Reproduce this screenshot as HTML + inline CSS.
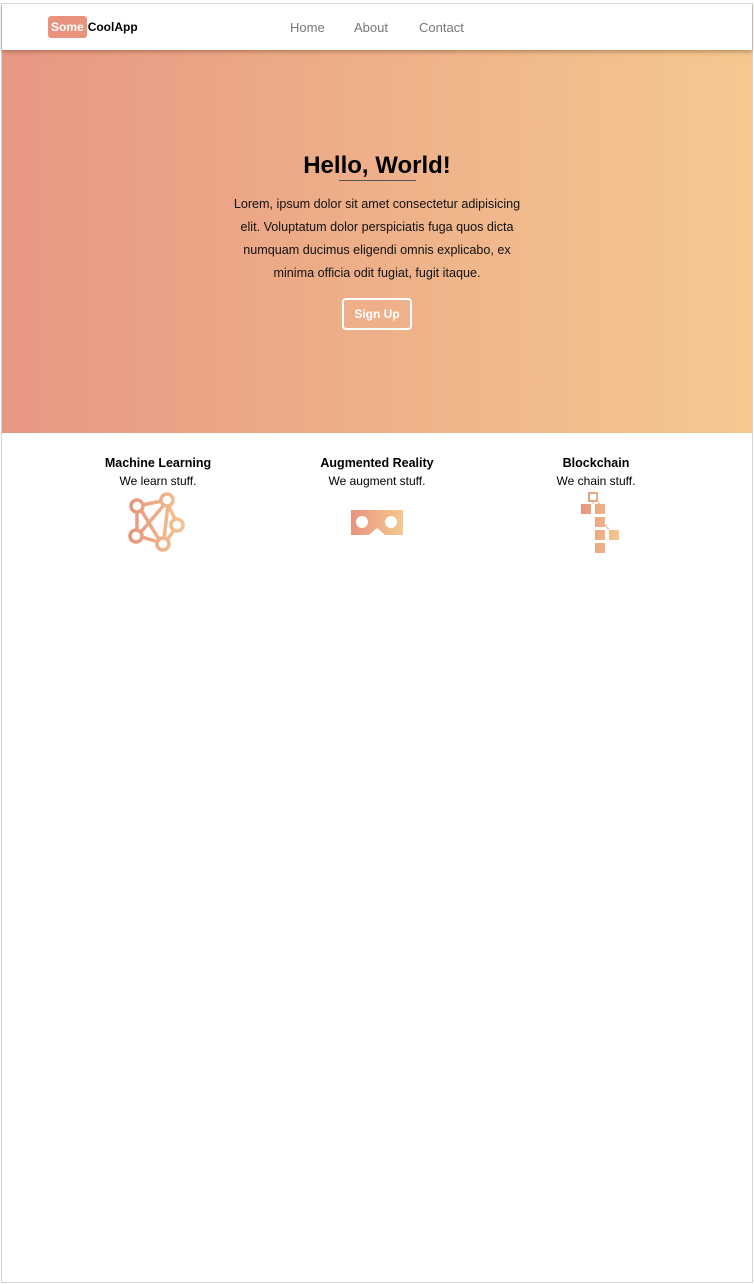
<!DOCTYPE html>
<html><head><style>
*{margin:0;padding:0;box-sizing:border-box}
body{width:754px;height:1284px;background:#fff;font-family:"Liberation Sans",sans-serif;position:relative;overflow:hidden}
.frame{position:absolute;left:1px;top:3px;width:752px;height:1280px;border:1px solid #d4d4d4;border-top:1px solid #e4e4e4}
nav{position:absolute;left:2px;top:4px;width:750px;height:46px;background:#fff;z-index:2;box-shadow:0 2px 4px rgba(120,70,40,.45)}
.logo{position:absolute;left:46px;top:12px;font-size:12px;font-weight:bold;display:flex;align-items:center}
.logo span{background:#e9937e;color:#fff;border-radius:3px;padding:4px 3px;margin-right:1px}
.links{position:absolute;top:16px;left:288px;font-size:13px;color:#777}
.links a{position:absolute;white-space:nowrap}
.hero{position:absolute;left:2px;top:50px;width:750px;height:383px;background:linear-gradient(90deg,#e89783,#f4c990)}
h1{position:absolute;top:102px;width:100%;text-align:center;font-size:24px;font-weight:bold;color:#000}
.ul{position:absolute;left:337px;top:130px;width:77px;height:1px;background:#555}
.p{position:absolute;left:227px;top:143px;width:296px;text-align:center;font-size:12.6px;line-height:23px;color:#111}
.btn{position:absolute;left:340px;top:248px;width:70px;height:32px;border:2px solid #fff;border-radius:4px;color:#fff;font-size:12px;font-weight:bold;text-align:center;line-height:28px}
.f{position:absolute;top:456px;width:200px;text-align:center;font-size:12px;color:#000}
.f b{display:block;font-size:12.5px;margin-bottom:4px}
svg{position:absolute}
</style></head><body>
<div class="frame"></div>
<nav>
<div class="logo"><span>Some</span>CoolApp</div>
<div class="links"><a style="left:0">Home</a><a style="left:64px">About</a><a style="left:129px">Contact</a></div>
</nav>
<div class="hero">
<h1>Hello, World!</h1>
<div class="ul"></div>
<div class="p">Lorem, ipsum dolor sit amet consectetur adipisicing elit. Voluptatum dolor perspiciatis fuga quos dicta numquam ducimus eligendi omnis explicabo, ex minima officia odit fugiat, fugit itaque.</div>
<div class="btn">Sign Up</div>
</div>
<div class="f" style="left:58px"><b>Machine Learning</b>We learn stuff.</div>
<div class="f" style="left:277px"><b>Augmented Reality</b>We augment stuff.</div>
<div class="f" style="left:496px"><b>Blockchain</b>We chain stuff.</div>
<svg width="754" height="100" style="left:0;top:480px">
<defs>
<linearGradient id="g2" gradientUnits="userSpaceOnUse" x1="128" x2="188"><stop offset="0" stop-color="#e8937e"/><stop offset="1" stop-color="#f4c98f"/></linearGradient>
<linearGradient id="g3" gradientUnits="userSpaceOnUse" x1="350" x2="403"><stop offset="0" stop-color="#e8937e"/><stop offset="1" stop-color="#f4c98f"/></linearGradient>
<linearGradient id="g4" gradientUnits="userSpaceOnUse" x1="580" x2="620"><stop offset="0" stop-color="#e8937e"/><stop offset="1" stop-color="#f4c98f"/></linearGradient></defs>
<g stroke="url(#g2)" stroke-width="3.5" fill="none">
<path d="M142 25 L162 21 M137 32 L137 50 M141 30 L160 61 M141 52 L164 25 M142 57 L158 62 M168 25 L175 39 M168 25 L164 59 M175 49 L167 60"/>
<circle cx="137" cy="26" r="6" fill="#fff"/><circle cx="167" cy="20" r="6" fill="#fff"/><circle cx="177" cy="45" r="6" fill="#fff"/><circle cx="136" cy="56" r="6" fill="#fff"/><circle cx="163" cy="64" r="6" fill="#fff"/>
</g>
<path fill="url(#g3)" fill-rule="evenodd" d="M351 30 H403 V55 H385 L377 48 L369 55 H351 Z M362 36 a6 6 0 1 0 0.01 0 Z M391 36 a6 6 0 1 0 0.01 0 Z"/>
<g fill="url(#g4)">
<rect x="589" y="13" width="8" height="8" fill="none" stroke="url(#g4)" stroke-width="2"/>
<path d="M593 21 V24 M597 21 L600 24 M604 44 L611 52" stroke="url(#g4)" stroke-width="1"/>
<rect x="581" y="24" width="10" height="10"/><rect x="595" y="24" width="10" height="10"/><rect x="595" y="37" width="10" height="10"/><rect x="595" y="50" width="10" height="10"/><rect x="609" y="50" width="10" height="10"/><rect x="595" y="63" width="10" height="10"/>
</g>
</svg>
</body></html>
